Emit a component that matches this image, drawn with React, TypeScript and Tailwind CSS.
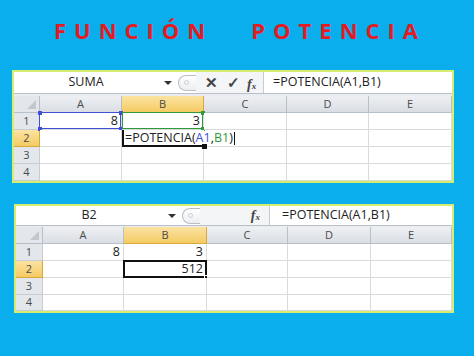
import type { ReactNode } from 'react';

const COLS = ['A', 'B', 'C', 'D', 'E'];

function Corner() {
  return (
    <div className="relative bg-[#e3e7ec] border-r border-b border-[#b7bfc9]">
      <div className="absolute right-[3px] bottom-[3px] w-0 h-0 border-l-[9px] border-l-transparent border-b-[9px] border-b-[#c3c8cf]" />
    </div>
  );
}

function ColHead({ label, active }: { label: string; active?: boolean }) {
  return (
    <div
      className={
        active
          ? 'flex items-center justify-center text-[11px] text-[#4a4a4a] bg-gradient-to-b from-[#fbe3a1] to-[#f5cb62] border-r border-b border-[#d7a93c]'
          : 'flex items-center justify-center text-[11px] text-[#4a4a4a] bg-gradient-to-b from-[#eef0f3] to-[#dadee4] border-r border-b border-[#b7bfc9]'
      }
    >
      {label}
    </div>
  );
}

function RowHead({ label, active }: { label: number; active?: boolean }) {
  return (
    <div
      className={
        active
          ? 'flex items-center justify-center text-[11px] text-[#4a4a4a] bg-gradient-to-b from-[#fbe3a1] to-[#f5cb62] border-r border-b border-[#d7a93c]'
          : 'flex items-center justify-center text-[11px] text-[#4a4a4a] bg-[#e3e7ec] border-r border-b border-[#c5ccd4]'
      }
    >
      {label}
    </div>
  );
}

function Cell({ children }: { children?: ReactNode }) {
  return (
    <div className="relative flex items-center justify-end pr-[3px] text-[12.5px] text-[#222] bg-white border-r border-b border-[#dadada]">
      {children}
    </div>
  );
}

function Handle({ className }: { className: string }) {
  return <div className={'absolute w-[4px] h-[4px] ' + className} />;
}

function Pill() {
  return (
    <div className="flex items-center h-full">
      <div className="w-[18px] h-[16px] rounded-l-full border border-r-0 border-[#b9bec5] bg-gradient-to-b from-white to-[#eceef1] flex items-center pl-[5px]">
        <div className="w-[5px] h-[5px] rounded-full border border-[#c9cdd3]" />
      </div>
    </div>
  );
}

function Arrow() {
  return <div className="w-0 h-0 border-l-[4px] border-l-transparent border-r-[4px] border-r-transparent border-t-[4px] border-t-[#333]" />;
}

function Fx() {
  return (
    <span className="font-['Liberation_Serif',serif] italic font-bold text-[14px] text-[#444] leading-none">
      f<span className="text-[9px]">x</span>
    </span>
  );
}

export default function App() {
  return (
    <div className="w-[474px] h-[356px] bg-[#0aaeec] font-['Open_Sans',sans-serif] overflow-hidden">
      {/* Title */}
      <div className="h-[70px] flex justify-center pt-[15px] pl-[6px] font-['Open_Sans',sans-serif] font-bold text-[22px] text-[#e31b23] tracking-[8px] leading-none">
        <div className="flex gap-[38px] pt-[4px]">
          <span>FUNCIÓN</span>
          <span>POTENCIA</span>
        </div>
      </div>

      {/* Sheet 1 - editing */}
      <div className="ml-[12px] w-[442px] border-2 border-[#d6ee70] bg-[#e9ecf0]">
        <div className="flex h-[22px] bg-white border-b border-[#b9c0c9] mb-[2px]">
          <div className="w-[144px] flex items-center justify-center text-[12.5px] text-[#222]">SUMA</div>
          <div className="w-[20px] flex items-center justify-center"><Arrow /></div>
          <Pill />
          <div className="w-[68px] flex items-center bg-[#f4f5f7] border-r border-[#c6cbd2]">
            <span className="ml-[9px] text-[15px] font-bold text-[#444] leading-none">✕</span>
            <span className="ml-[9px] text-[15px] font-bold text-[#444] leading-none">✓</span>
            <span className="ml-[7px]"><Fx /></span>
          </div>
          <div className="flex-1 flex items-center pl-[9px] text-[12.5px] text-[#222]">=POTENCIA(A1,B1)</div>
        </div>
        <div className="grid grid-cols-[26px_82px_82px_83px_82px_83px] grid-rows-[17px_17px_17px_17px_17px]">
          <Corner />
          {COLS.map((c) => (
            <ColHead key={c} label={c} active={c === 'B'} />
          ))}
          <RowHead label={1} />
          <Cell>
            8
            <div className="absolute -left-[1px] -top-[1px] right-0 bottom-0 border border-[#3f4fd6]" />
            <Handle className="-left-[2px] -top-[2px] bg-[#3f4fd6]" />
            <Handle className="-right-[2px] -top-[2px] bg-[#3f4fd6]" />
            <Handle className="-left-[2px] -bottom-[2px] bg-[#3f4fd6]" />
            <Handle className="-right-[2px] -bottom-[2px] bg-[#3f4fd6]" />
          </Cell>
          <Cell>
            3
            <div className="absolute left-0 -top-[1px] right-0 bottom-0 border border-[#2f9a3c]" />
            <Handle className="-right-[2px] -top-[2px] bg-[#2f9a3c]" />
            <Handle className="-right-[2px] -bottom-[2px] bg-[#2f9a3c]" />
          </Cell>
          <Cell />
          <Cell />
          <Cell />
          <RowHead label={2} active />
          <Cell />
          <div className="relative bg-white border-b border-[#dadada] z-10">
            <div className="absolute left-0 top-0 bottom-0 w-[2px] bg-[#111]" />
            <div className="absolute left-0 right-0 bottom-[-1px] h-[2px] bg-[#111]" />
            <div className="absolute right-[-3px] bottom-[-3px] w-[5px] h-[5px] bg-[#111]" />
            <div className="absolute left-[3px] top-0 bottom-0 flex items-center whitespace-nowrap text-[12.5px] text-[#222]">
              =POTENCIA(<span className="text-[#3f4fd6]">A1</span>,<span className="text-[#2f9a3c]">B1</span>)
              <span className="ml-[1px] w-[1px] h-[13px] bg-[#111]" />
            </div>
          </div>
          <div className="bg-white border-r border-b border-[#dadada]" />
          <Cell />
          <Cell />
          {[3, 4].map((r) => (
            <div key={r} className="contents">
              <RowHead label={r} />
              <Cell />
              <Cell />
              <Cell />
              <Cell />
              <Cell />
            </div>
          ))}
        </div>
      </div>

      {/* Sheet 2 - result */}
      <div className="mt-[21px] ml-[14px] w-[440px] border-2 border-[#d6ee70] bg-[#e9ecf0]">
        <div className="flex h-[20px] bg-white border-b border-[#b9c0c9] mb-[1px]">
          <div className="w-[146px] flex items-center justify-center text-[12.5px] text-[#222]">B2</div>
          <div className="w-[20px] flex items-center justify-center"><Arrow /></div>
          <Pill />
          <div className="w-[70px] flex items-center justify-end pr-[9px] bg-[#f4f5f7] border-r border-[#c6cbd2]">
            <Fx />
          </div>
          <div className="flex-1 flex items-center pl-[12px] text-[12.5px] text-[#222]">=POTENCIA(A1,B1)</div>
        </div>
        <div className="grid grid-cols-[27px_81px_83px_81px_83px_81px] grid-rows-[17px_17px_17px_17px_16px]">
          <Corner />
          {COLS.map((c) => (
            <ColHead key={c} label={c} active={c === 'B'} />
          ))}
          <RowHead label={1} />
          <Cell>8</Cell>
          <Cell>3</Cell>
          <Cell />
          <Cell />
          <Cell />
          <RowHead label={2} active />
          <Cell />
          <Cell>
            <span className="z-10">512</span>
            <div className="absolute -left-[1px] -top-[1px] right-[-1px] bottom-[-1px] border-2 border-[#111]" />
            <div className="absolute right-[-3px] bottom-[-3px] w-[5px] h-[5px] bg-[#111] border border-white" />
          </Cell>
          <Cell />
          <Cell />
          <Cell />
          {[3, 4].map((r) => (
            <div key={r} className="contents">
              <RowHead label={r} />
              <Cell />
              <Cell />
              <Cell />
              <Cell />
              <Cell />
            </div>
          ))}
        </div>
      </div>
    </div>
  );
}
